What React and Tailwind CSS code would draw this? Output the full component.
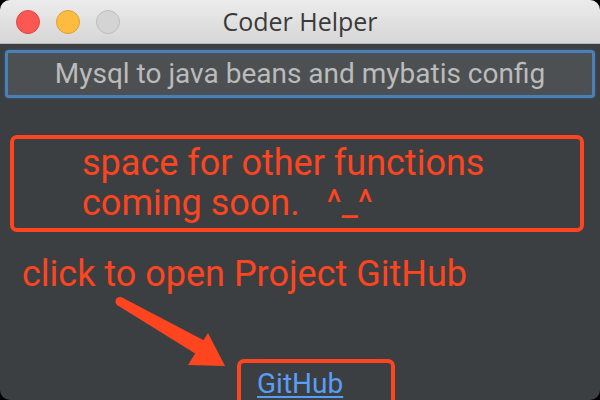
/**
 * Coder Helper window
 */

const RED = 'text-[#ff4420]';

function TrafficLights() {
  return (
    <div className="flex items-center gap-[16px] pl-[16px]">
      <span className="h-[24px] w-[24px] rounded-full bg-[#fc5753] border border-[#df4744]" />
      <span className="h-[24px] w-[24px] rounded-full bg-[#fdbc40] border border-[#de9f34]" />
      <span className="h-[24px] w-[24px] rounded-full bg-[#d4d4d4] border border-[#bdbdbd]" />
    </div>
  );
}

function Arrow() {
  // annotation arrow pointing at the GitHub link
  return (
    <svg className="absolute left-0 top-0" width="600" height="400" viewBox="0 0 600 400">
      <polygon points="117,305 123,298 207,342 196,354" fill="#ff4420" />
      <circle cx="120" cy="301.5" r="4.5" fill="#ff4420" />
      <polygon points="208,333 225,366 188,365" fill="#ff4420" />
    </svg>
  );
}

export default function App() {
  return (
    <div className="h-[400px] w-[600px] bg-black" style={{ fontFamily: 'Roboto, "Liberation Sans", sans-serif' }}>
      <div className="relative flex h-full flex-col overflow-hidden rounded-[10px] bg-[#3c3f41]">
        {/* Title bar */}
        <div className="relative flex h-[44px] shrink-0 items-center border-b border-[#b9b9b9] bg-gradient-to-b from-[#ececec] to-[#d6d6d6]">
          <TrafficLights />
          <div className="absolute inset-0 flex items-center justify-center text-[25px] text-[#3a3a3a]" style={{ fontFamily: '"Open Sans", "Liberation Sans", sans-serif' }}>
            Coder Helper
          </div>
        </div>

        <div className="flex flex-1 flex-col px-[5px] pt-[6px]">
          {/* Main action button */}
          <div className="flex h-[48px] shrink-0 items-center justify-center rounded-[4px] border-[3px] border-[#4b7fb8] bg-[#4c5052] text-[28px] text-[#bbbbbb] shadow-[0_0_2px_#3f6ea3]">
            Mysql to java beans and mybatis config
          </div>

          {/* Placeholder annotation */}
          <div className={`mx-[5px] mt-[37px] h-[97px] w-[574px] shrink-0 rounded-[7px] border-4 border-[#ff4420] pl-[68px] pt-[4px] text-[36px] leading-[40px] ${RED}`}>
            <div>space for other functions</div>
            <div className="whitespace-pre">coming soon.   ^_^</div>
          </div>

          <div className={`mt-[22px] pl-[17px] text-[36px] leading-[40px] ${RED}`}>click to open Project GitHub</div>

          <div className="mt-[65px] ml-[232px] flex h-[48px] w-[158px] shrink-0 rounded-[7px] border-4 border-[#ff4420] pl-[16px] pt-[5px]">
            <a href="#" className="text-[28px] leading-[32px] text-[#589df6] underline underline-offset-[3px]">
              GitHub
            </a>
          </div>
        </div>

        <Arrow />
      </div>
    </div>
  );
}
